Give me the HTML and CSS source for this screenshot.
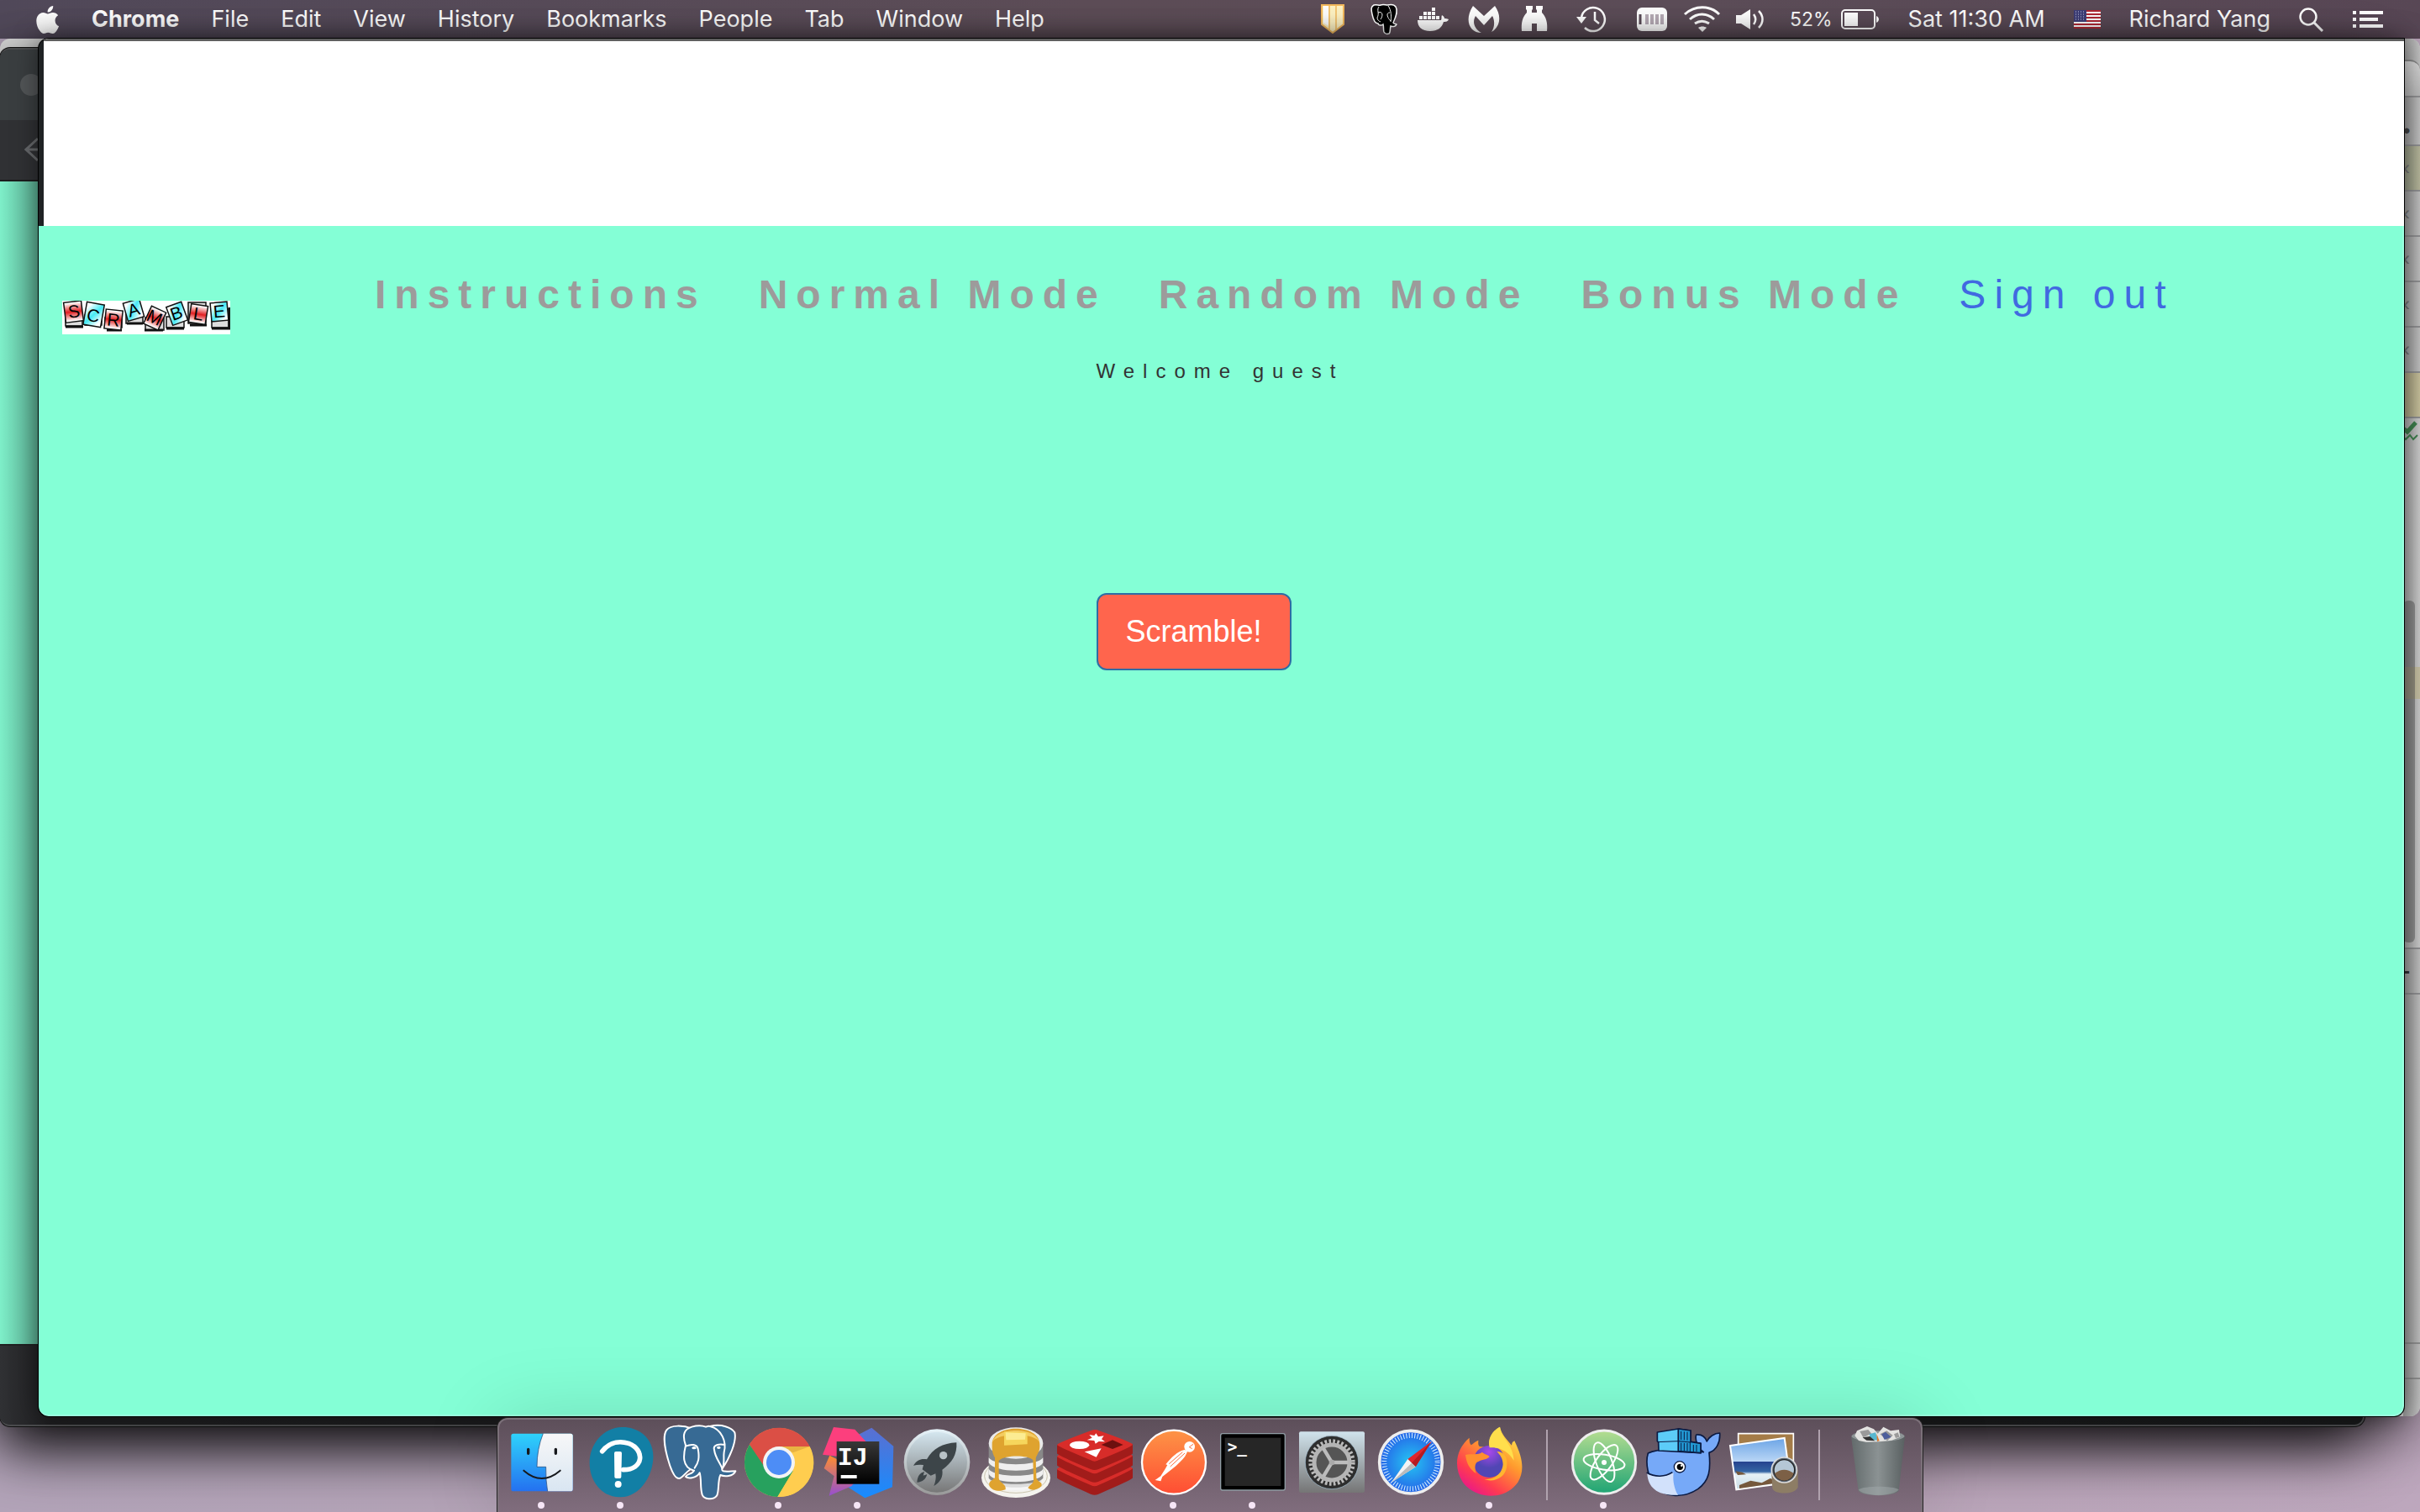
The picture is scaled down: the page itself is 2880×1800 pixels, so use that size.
FILE: index.html
```html
<!DOCTYPE html>
<html lang="en">
<head>
<meta charset="utf-8">
<title>Scramble</title>
<link rel="stylesheet" href="styles.css">
</head>
<body>
<header class="menubar">
  <nav class="menus" aria-label="Menu bar">
    <button class="menu apple" aria-label="Apple menu"><svg width="28" height="33" viewBox="2 0 20.5 24" preserveAspectRatio="none"><path fill="#fff" d="M12.152 6.896c-.948 0-2.415-1.078-3.96-1.04-2.04.027-3.91 1.183-4.961 3.014-2.117 3.675-.546 9.103 1.519 12.09 1.013 1.454 2.208 3.09 3.792 3.039 1.52-.065 2.09-.987 3.935-.987 1.831 0 2.35.987 3.96.948 1.637-.026 2.676-1.48 3.676-2.948 1.156-1.688 1.636-3.325 1.662-3.415-.039-.013-3.182-1.221-3.22-4.857-.026-3.04 2.48-4.494 2.597-4.559-1.429-2.09-3.623-2.324-4.39-2.376-2-.156-3.675 1.09-4.61 1.09zM15.53 3.83c.843-1.012 1.4-2.427 1.245-3.83-1.207.052-2.662.805-3.532 1.818-.78.896-1.454 2.338-1.273 3.714 1.338.104 2.715-.688 3.559-1.701"/></svg></button>
    <button class="menu app-name">Chrome</button>
    <button class="menu">File</button>
    <button class="menu">Edit</button>
    <button class="menu">View</button>
    <button class="menu">History</button>
    <button class="menu">Bookmarks</button>
    <button class="menu">People</button>
    <button class="menu">Tab</button>
    <button class="menu">Window</button>
    <button class="menu">Help</button>
  </nav>
  <div class="status">
    <div class="tray">
      <svg width="60" height="44" viewBox="0 0 60 44"><path d="M17 5h26v23L30 38 17 28z" fill="#fff3c4" stroke="#f3b95c" stroke-width="2"/><path d="M26 6v28M34 6v28" stroke="#f5c877" stroke-width="2"/><path d="M19 6h6v24l-6-4z" fill="#fff"/></svg>
      <svg width="60" height="44" viewBox="0 0 60 44"><path d="M19 5c4-1 6 1 8 0 3-1 6 0 8 0 4-1 8-1 10 2 3 5-1 15-3 19 1 2 3 1 4 2-1 3-5 3-7 2-1 3 0 8-2 9-3 1-5 0-6-2-1-3 0-6-1-9-2 2-6 1-6-1-4 0-6-6-7-11-1-5-2-9 2-11z" fill="#000" stroke="#fff" stroke-width="1.5"/><path d="M25 7c-3 4 1 8-2 13 0 3 2 4 4 5M24 14c6-2 6 4 3 8M36 6c4 5 4 14 3 19M38 14c-5 0-3 6 1 10" fill="none" stroke="#fff" stroke-width="1"/></svg>
      <svg width="60" height="44" viewBox="0 0 60 44"><g fill="#fff"><path d="M11 23h28c1-2 0-4 1-6 3 2 3 3 3 4 2 0 3 0 5 1-1 3-4 3-6 3-2 7-7 11-16 11-10 0-15-5-15-13z"/><path d="M13 18h4v4h-4zM18 18h4v4h-4zM23 18h4v4h-4zM28 18h4v4h-4zM33 18h4v4h-4zM18 13h4v4h-4zM23 13h4v4h-4zM28 13h4v4h-4zM28 8h4v4h-4z"/></g></svg>
      <svg width="60" height="44" viewBox="0 0 60 44"><path fill="#fff" d="M17 6l13 12L43 6c8 11 7 25-4 31 4-6 4-14 1-19L30 29 20 18c-4 7-2 15 7 20C13 38 6 23 17 6z"/></svg>
      <svg width="60" height="44" viewBox="0 0 60 44"><path fill="#fff" d="M20 6h8v4l-1 1v3h6v-3l-1-1V6h8v4l-1 1v3c5 5 7 12 6 22H33v-9h-6v9H15c-1-10 1-17 6-22v-3l-1-1z"/></svg>
      <svg width="78" height="44" viewBox="0 0 78 44"><path d="M26 20a14 14 0 1 1 4 12" fill="none" stroke="#fff" stroke-width="2.5"/><path d="M20 19h12l-6 8z" fill="#fff"/><path d="M42 13v10l5 4" fill="none" stroke="#fff" stroke-width="2.5"/></svg>
      <svg width="62" height="44" viewBox="0 0 62 44"><rect x="14" y="8" width="36" height="28" rx="6" fill="#fff"/><path d="M18 16v12" stroke="#5b4c58" stroke-width="3"/><path d="M26 16v12M32 16v12M38 16v12M44 16v12" stroke="#b9aeb8" stroke-width="4"/></svg>
      <svg width="60" height="44" viewBox="0 0 60 44"><g fill="none" stroke="#fff" stroke-width="3"><path d="M9 16c12-11 30-11 41 0M15 22c9-8 20-8 29 0M21 27c6-4 11-4 17 0"/></g><path d="M25 32c3-2 7-2 10 0l-5 5z" fill="#fff"/></svg>
      <svg width="60" height="44" viewBox="0 0 60 44"><path d="M10 17h6l11-7v24l-11-7h-6z" fill="#fff"/><path d="M31 16c3 4 3 8 0 12M37 12c6 6 6 14 0 20" fill="none" stroke="#fff" stroke-width="2.5"/></svg>
    </div>
    <div class="power"><span class="percent">52%</span><svg width="46" height="26" viewBox="0 0 46 26"><rect x="1" y="2" width="39" height="22" rx="4" fill="none" stroke="#fff" stroke-width="2"/><path d="M4 5h16v16H4zM42 9c4 2 4 6 0 8z" fill="#fff"/></svg></div>
    <span>Sat 11:30 AM</span>
    <svg width="32" height="22" viewBox="0 0 32 22"><path fill="#fff" d="M0 0h32v22H0z"/><path d="M0 1h32M0 5h32M0 9h32M0 13h32M0 17h32M0 21h32" stroke="#b02a35" stroke-width="2"/><path fill="#3f3f78" d="M0 0h15v14H0z"/><path d="M2 2h12M2 5h12M2 8h12M2 11h12" stroke="#cfd0e8" stroke-width="1" stroke-dasharray="1 2"/></svg>
    <span>Richard Yang</span>
    <svg width="30" height="30" viewBox="0 0 30 30"><circle cx="11" cy="12" r="9.500" fill="none" stroke="#fff" stroke-width="2.500"/><path d="M18 19l10 10" stroke="#fff" stroke-width="3"/></svg>
    <svg width="36" height="22" viewBox="0 0 36 22"><path d="M0 3h4M8 3h28M0 11h4M8 11h22M0 19h4M8 19h28" stroke="#fff" stroke-width="4"/></svg>
  </div>
</header>

<main class="desktop">
  <section class="window editor" aria-label="Editor">
    <div class="editor-rail">
      <div class="rail-tab title"></div>
      <div class="rail-tab tools">•</div>
      <div class="rail-tab marked">‹</div>
      <div class="rail-tab">‹</div>
      <div class="rail-tab">‹</div>
      <div class="rail-tab">‹</div>
      <div class="rail-tab">‹</div>
      <div class="rail-tab changed"></div>
      <div class="rail-body"><svg width="19" height="28" viewBox="0 0 19 28"><path d="M0 12l5 4L15 5" fill="none" stroke="#40834f" stroke-width="5"/><path d="M0 22l3 3 5-5 4 5 5-5" fill="none" stroke="#40834f" stroke-width="2"/></svg></div>
      <div class="rail-bar">-</div>
      <div class="rail-panel"></div>
      <div class="rail-foot"></div>
      <div class="rail-end"></div>
      <div class="scroll-mark"></div>
      <div class="scroll-thumb"></div>
    </div>
  </section>
  <section class="window back-browser" aria-label="Background browser">
    <div class="tabs"><span class="dot"></span></div>
    <div class="toolbar"><svg width="30" height="30" viewBox="0 0 30 30"><path d="M16 2L2 15l14 13M2 15h26" fill="none" stroke="#66686b" stroke-width="3"/></svg></div>
    <div class="back-page"></div>
    <div class="downloads"></div>
  </section>
  <section class="window browser" aria-label="Browser">
    <div class="blank"></div>
    <div class="page">
      <div class="page-head">
        <a href="#" class="brand"><svg width="200" height="40" viewBox="0 0 200 40" role="img" aria-label="Scramble">
          <defs>
            <linearGradient id="lr" x2="0" y2="1"><stop offset=".05" stop-color="#fff"/><stop offset=".5" stop-color="#e21f22"/><stop offset=".95" stop-color="#fff"/></linearGradient>
            <linearGradient id="lc" x2="1" y2="1"><stop offset=".15" stop-color="#fff"/><stop offset=".5" stop-color="#46eaf5"/><stop offset=".85" stop-color="#fff"/></linearGradient>
          </defs>
          <path fill="#fff" d="M0 0h200v40H0z"/>
          <g fill="#ddd" stroke="#111" stroke-width="1.500"><path d="M4 18h20v12H4zM27 17h20v12H27zM51 20h20v12H51zM76 14h20v13H76zM99 20h22v15H99zM124 19h21v13H124zM150 2h21v25H150zM178 10h20v22H178z"/></g>
          <path d="M4 31h21M53 35h18M77 27h19M98 35h22M124 33h21M152 29h20M178 33h22M199 8v25" stroke="#111" stroke-width="3"/>
          <g stroke="#111" stroke-width="1.500" font-family="Liberation Sans" font-size="21" text-anchor="middle">
            <g transform="rotate(-7 14 13)"><rect x="3" y="1" width="21" height="24" fill="url(#lr)"/><text x="14" y="20" stroke="none">S</text></g>
            <g transform="rotate(10 37 17)"><rect x="27" y="3" width="21" height="27" fill="url(#lc)"/><text x="37" y="25" stroke="none">C</text></g>
            <g transform="rotate(6 61 23)"><rect x="51" y="11" width="20" height="23" fill="url(#lr)"/><text x="61" y="30" stroke="none">R</text></g>
            <g transform="rotate(-16 85 11)"><rect x="75" y="0" width="20" height="22" fill="url(#lc)"/><text x="85" y="18" stroke="none">A</text></g>
            <g transform="rotate(25 110 20)"><rect x="101" y="9" width="19" height="23" fill="url(#lr)"/><text x="110" y="27" stroke="none">M</text></g>
            <g transform="rotate(-20 136 15)"><rect x="127" y="4" width="19" height="23" fill="url(#lc)"/><text x="136" y="22" stroke="none">B</text></g>
            <g transform="rotate(9 162 16)"><rect x="152" y="5" width="20" height="22" fill="url(#lr)"/><text x="162" y="23" stroke="none">L</text></g>
            <g transform="rotate(-5 187 13)"><rect x="177" y="2" width="20" height="22" fill="url(#lc)"/><text x="187" y="20" stroke="none">E</text></g>
          </g></svg></a>
        <nav class="modes" aria-label="Game modes">
          <a href="#">Instructions</a>
          <a href="#">Normal Mode</a>
          <a href="#">Random Mode</a>
          <a href="#">Bonus Mode</a>
          <a href="#" class="signout">Sign out</a>
        </nav>
      </div>
      <div class="play">
        <p class="welcome">Welcome guest</p>
        <button class="scramble">Scramble!</button>
      </div>
    </div>
  </section>
</main>

<ul class="dock" aria-label="Dock">
  <li class="app running"><svg viewBox="54 54 282 336"><defs><linearGradient id="fa" x2="0" y2="1"><stop stop-color="#2fd3fb"/><stop offset="1" stop-color="#2471f0"/></linearGradient><linearGradient id="fb" x2="0" y2="1"><stop stop-color="#f7f7f8"/><stop offset="1" stop-color="#d9e6f2"/></linearGradient></defs><rect x="85" y="110" width="220" height="206" rx="8" fill="url(#fa)"/><path d="M199 110h98q8 0 8 8v190q0 8-8 8h-82q-7-40-6-87h-32q0-65 22-119z" fill="url(#fb)"/><path d="M199 110q-22 54-22 119h32q-1 47 6 87" fill="none" stroke="#1c3e70" stroke-width="2"/><path d="M146 166v15M244 166v15" stroke="#16181c" stroke-width="10" stroke-linecap="round"/><path d="M130 242q64 56 130 0" fill="none" stroke="#16181c" stroke-width="6" stroke-linecap="round"/></svg></li>
  <li class="app running"><svg viewBox="336 54 282 336"><path d="M480 87c65-2 116 45 112 112-3 65-48 137-117 138-66 1-110-58-110-122 0-68 49-126 115-128z" fill="#127fa5"/><path d="M410 173c30-38 70-36 95-28 58 22 54 95-20 94" fill="none" stroke="#fff" stroke-width="17" stroke-linecap="round"/><path d="M453 180q0-6 6-6h15q6 0 6 6l-2 85q0 5-5 5h-13q-6 0-6-5z" fill="#fff"/><circle cx="467" cy="291" r="12" fill="#fff"/></svg></li>
  <li class="app"><svg viewBox="618 54 282 336"><g fill="#376a94" stroke="#fff" stroke-width="6" stroke-linejoin="round" stroke-linecap="round"><path d="M730 92c-30-12-75-14-90 5-16 22-4 80 12 128 10 28 22 48 34 45 14-5 22-22 36-30"/><path d="M795 84c40-10 78 4 88 22 8 30-18 92-45 130-3 14 28 8 48 8-8 20-40 20-54 14-10 20-4 60-13 74-14 18-46 12-52-4-8-24-2-54-9-78-12 22-44 20-50 14 6-12 24-8 30-22-45-10-38-58-30-90-14-40-4-58 22-66 20-6 40-4 50 0 10-4 12-4 15-2z"/><path d="M708 155c20-8 40-8 44 10 6 32 2 48-12 68M848 150c-20-4-44 0-38 18 4 30 20 44 28 66M795 84c42 10 60 56 50 92-3 20 3 36-5 56" fill="none"/></g><ellipse cx="738" cy="161" rx="8" ry="5" fill="#fff"/><ellipse cx="826" cy="160" rx="7" ry="5" fill="#fff"/></svg></li>
  <li class="app running"><svg viewBox="900 54 282 336"><circle cx="1041" cy="213" r="123" fill="#ffcd4f"/><path d="M1041 213L936 149a123 123 0 0 1 215 7h-110z" fill="#db4f45"/><path d="M1041 90a123 123 0 0 0-105 59l52 90 53-26z" fill="#db4f45"/><path d="M936 149a123 123 0 0 0 100 187l55-92-50-31-44 27z" fill="#27a15e"/><path d="M1041 156h110a123 123 0 0 1-115 180l58-95z" fill="#ffcd4f"/><path d="M1041 156h110l-60 22z" fill="#d8a23a" opacity=".6"/><circle cx="1041" cy="213" r="57" fill="#f4f4f4"/><circle cx="1041" cy="213" r="45" fill="#4d8df6"/></svg></li>
  <li class="app running"><svg viewBox="1182 54 282 336"><defs><linearGradient id="ij" x2="0" y2="1"><stop stop-color="#5b6fd0"/><stop offset="1" stop-color="#168cff"/></linearGradient><linearGradient id="ijp" x2="0" y2="1"><stop stop-color="#ff8d2e"/><stop offset="1" stop-color="#954fd0"/></linearGradient><linearGradient id="ijk" x2="0" y2="1"><stop stop-color="#383838"/><stop offset="1" stop-color="#000"/></linearGradient></defs><path d="M1372 89l78 66-4 146-98 39-68-44 40-180z" fill="url(#ij)"/><path d="M1222 188l-20 46 36 28-18 70 80-34 40-50z" fill="url(#ijp)"/><path d="M1236 87l76 8 40 44-40 60-115-14z" fill="#fc3f7d"/><rect x="1247" y="138" width="152" height="152" fill="url(#ijk)"/><text x="1250" y="223" font-family="Liberation Mono" font-size="90" font-weight="700" fill="#fff">IJ</text><path d="M1262 258h57v12h-57z" fill="#fff"/></svg></li>
  <li class="app"><svg viewBox="54 54 282 336"><defs><linearGradient id="ro" x2="0" y2="1"><stop stop-color="#d4e6ef"/><stop offset="1" stop-color="#777"/></linearGradient><linearGradient id="ror" x2="0" y2="1"><stop stop-color="#e6f3f9"/><stop offset="1" stop-color="#999"/></linearGradient></defs><circle cx="195" cy="212" r="118" fill="url(#ror)"/><circle cx="195" cy="212" r="108" fill="url(#ro)"/><path d="M265 142c-50 2-84 22-106 60-22-3-34 2-48 22q18-4 36-2l-4 16 30 22 17-7q4 20-6 44c24-14 34-34 30-58 35-24 54-55 51-97zM150 246c-16 4-24 16-26 38 20-2 32-12 36-30-8 6-12 4-14 6z" fill="#3d4549"/><circle cx="218" cy="188" r="14" fill="#b9c3c7"/></svg></li>
  <li class="app"><svg viewBox="336 54 282 336"><ellipse cx="477" cy="268" rx="123" ry="71" fill="#f4f3ee"/><ellipse cx="477" cy="262" rx="112" ry="60" fill="none" stroke="#c9c3ad" stroke-width="3"/><path d="M384 258v30c20 34 160 34 184 0v-30z" fill="#ddd"/><path d="M380 144v124c10 30 184 30 194 0V144z" fill="#888"/><path d="M380 236v18c20 38 174 38 194 0v-18c-20 32-174 32-194 0zM380 196v18c20 38 174 38 194 0v-18c-20 32-174 32-194 0z" fill="#efefef"/><path d="M384 280c20 30 164 30 184 0v14c-20 26-164 26-184 0z" fill="#f6f6f6"/><ellipse cx="477" cy="144" rx="97" ry="56" fill="#e9e9e9"/><path d="M392 148c0-74 170-74 170 0 2 28-10 36-14 50l2 70c6 18 24 14 18 30-18 16-36 16-48 6 10-14 20-14 20-30l-2-70c-20-18-98-18-122 2v64c4 18 28 20 24 40-20 8-48 6-58-14-4-20 16-18 20-30v-70c-10-16-10-30-10-48z" fill="#dfa32f"/><path d="M392 144c10-60 160-60 170 0-10-40-160-40-170 0z" fill="#f3cb62"/><path d="M435 103l83 3v42l-83 4z" fill="#f6d65c"/><path d="M440 106l72 3-2 22-68 2z" fill="#fcec92"/></svg></li>
  <li class="app"><svg viewBox="618 54 282 336"><path fill="#a11c1a" d="M624 238v30q0 6 120 58 14 6 28 0 122-52 122-58v-34z"/><path fill="#d82c29" d="M624 236q0-6 120-54 18-6 30 0 120 46 120 52t-122 60q-14 8-28 0-120-52-120-58z"/><path fill="#a11c1a" d="M624 193v30q0 6 120 58 14 6 28 0 122-52 122-58v-34z"/><path fill="#d82c29" d="M624 191q0-6 120-54 18-6 30 0 120 46 120 52t-122 60q-14 8-28 0-120-52-120-58z"/><path fill="#a11c1a" d="M624 151v30q0 6 120 56 14 6 28 0 122-50 122-56v-34z"/><path fill="#d82c29" d="M624 150q0-6 120-50 18-8 30 0 120 42 120 49t-122 56q-14 8-28 0-120-50-120-55z"/><ellipse cx="704" cy="151" rx="35" ry="14" fill="#fff"/><path fill="#fff" d="M763 109l8 12 20-3-8 12 12 9-22-1-12 8-4-11-26-2 18-8-10-11 18 3zM722 175l60-12-18 31z"/><path fill="#6d100f" d="M782 150l40-17 38 17-38 15z"/></svg></li>
  <li class="app running"><svg viewBox="900 54 282 336"><defs><linearGradient id="pm" x2="0" y2="1"><stop stop-color="#fd9446"/><stop offset="1" stop-color="#ff4d33"/></linearGradient></defs><circle cx="1041" cy="212" r="114" fill="url(#pm)" stroke="#fff" stroke-width="7"/><circle cx="1097" cy="157" r="19" fill="#fff"/><path d="M1078 168c-26 6-46 28-66 52l6 2-8 14-16 26-20 14 20 4 6-16 48-38 14-14q24-22 28-42z" fill="#fff"/><path d="M1080 180l-52 48M1072 176l-48 42M1110 148l-14 10 10 6" fill="none" stroke="#fe6d3c" stroke-width="3"/></svg></li>
  <li class="app running"><svg viewBox="1182 54 282 336"><rect x="1208" y="110" width="230" height="202" rx="7" fill="#000" stroke="#8f9ca3" stroke-width="4"/><rect x="1223" y="125" width="200" height="172" fill="#262626"/><text x="1232" y="176" font-family="DejaVu Sans Mono" font-size="58" font-weight="700" fill="#fff">&gt;_</text></svg></li>
  <li class="app"><svg viewBox="54 54 282 336"><defs><linearGradient id="se" x2="0" y2="1"><stop stop-color="#d0e3ec"/><stop offset="1" stop-color="#757575"/></linearGradient></defs><rect x="78" y="103" width="234" height="218" rx="6" fill="url(#se)"/><circle cx="195" cy="213" r="95" fill="#2e2e2e" stroke="#a9c3d4" stroke-width="2"/><circle cx="195" cy="213" r="76" fill="none" stroke="#bbb" stroke-width="14" stroke-dasharray="8 7"/><circle cx="195" cy="213" r="63" fill="#555" stroke="#b5b5b5" stroke-width="15"/><path d="M195 213h58M195 213l-30-50M195 213l-30 50" stroke="#bcbcbc" stroke-width="13"/><circle cx="195" cy="213" r="10" fill="#aaa"/></svg></li>
  <li class="app"><svg viewBox="336 54 282 336"><defs><radialGradient id="sa"><stop stop-color="#25c6f2"/><stop offset="1" stop-color="#2563e8"/></radialGradient></defs><circle cx="477" cy="212" r="112" fill="url(#sa)" stroke="#eee" stroke-width="11"/><circle cx="477" cy="212" r="95" fill="none" stroke="#d8efff" stroke-width="18" stroke-dasharray="3 7"/><path d="M551 138l-57 91-28-28z" fill="#e0252c"/><path d="M551 138l-57 91-14-14z" fill="#b61a20"/><path d="M408 284l58-83 28 28z" fill="#f3f3f3"/><path d="M408 284l72-69 14 14z" fill="#bbb"/></svg></li>
  <li class="app running"><svg viewBox="618 54 282 336"><defs><linearGradient id="ff" x1="1" y1="0" x2=".3" y2="1"><stop offset=".1" stop-color="#ffe84f"/><stop offset=".45" stop-color="#ff9a2e"/><stop offset=".8" stop-color="#ff3b50"/><stop offset="1" stop-color="#ea1a86"/></linearGradient><radialGradient id="fp" cy=".2"><stop stop-color="#a847ea"/><stop offset="1" stop-color="#5146b4"/></radialGradient></defs><path d="M686 125c0 12 0 18 6 26 8-4 12-12 26-17 0 10-2 16 4 22l36 4c-6-30 10-60 37-74 6 28 26 46 42 66 2-8 0-10 10-16 34 70 34 110 12 148-48 68-152 60-196 0-36-56-24-120 23-159z" fill="url(#ff)"/><circle cx="757" cy="210" r="57" fill="url(#fp)"/><path d="M672 186c20-6 46 2 60-10 6 8 20 8 26 16-8 12-30 10-40 18-16 4-12 30-8 42-22-14-34-34-38-66z" fill="#ff8f2f"/><path d="M784 174c30 0 38 26 36 46 0 44-40 66-80 54 40 0 64-24 66-54 0-20-10-34-22-46z" fill="#ffb52f"/><path d="M758 160c-8-32 10-60 37-74 4 44 48 60 50 120-20-34-50-48-87-46z" fill="#ffdf4c"/></svg></li>
  <li class="divider" aria-hidden="true"></li>
  <li class="app running"><svg viewBox="-114 54 282 336"><defs><linearGradient id="at" x2="0" y2="1"><stop stop-color="#b5dd91"/><stop offset="1" stop-color="#1ea474"/></linearGradient></defs><circle cx="27" cy="212" r="113" fill="url(#at)" stroke="#eee" stroke-width="9"/><g fill="none" stroke="#fff" stroke-width="6"><ellipse cx="27" cy="212" rx="74" ry="27" transform="rotate(9 27 212)"/><ellipse cx="27" cy="212" rx="74" ry="28" transform="rotate(69 27 212)"/><ellipse cx="27" cy="212" rx="74" ry="28" transform="rotate(-54 27 212)"/></g><circle cx="27" cy="213" r="9" fill="#fff"/></svg></li>
  <li class="app"><svg viewBox="168 54 282 336"><g stroke="#0b1a42" stroke-width="5" stroke-linejoin="round"><path d="M382 176c-20-14-32-44-26-62 18-2 32 8 38 24 8-16 26-30 46-30 2 34-12 62-38 70 6 60 2 100-40 130-50 34-116 30-150-6-30-34-38-90-28-122 40-22 150-12 198-4z" fill="#76a9f8"/><path d="M181 252c30 14 62 14 94-2-4 30 4 60 16 79-70 4-108-24-110-77z" fill="#d2e1fb" stroke="none"/><path d="M179 249c30 18 66 16 92-1" fill="none"/><path d="M217 105l75-12 44 6v40l36 6v34l-150-8-1-30-4-4z" fill="#5cccf8"/><path d="M292 93l44 6v40l36 6v34l-80-6z" fill="#2299d4"/><path d="M218 140l74-3 44 4M292 93v80M334 140v36M302 102v30M313 103v30M324 104v30M302 143v28M313 144v28M324 144v28M346 150v24M357 150v24" fill="none" stroke-width="3"/></g><circle cx="297" cy="229" r="20" fill="#fff" stroke="#0b1a42" stroke-width="4"/><circle cx="298" cy="229" r="11" fill="#000"/><circle cx="304" cy="224" r="4" fill="#fff"/></svg></li>
  <li class="app"><svg viewBox="450 54 282 336"><defs><linearGradient id="sk" x2="0" y2="1"><stop stop-color="#6ba4e6"/><stop offset=".45" stop-color="#b8d5f5"/><stop offset=".46" stop-color="#26438f"/><stop offset=".65" stop-color="#3465a3"/><stop offset=".7" stop-color="#e6f1f6"/><stop offset="1" stop-color="#c8dce5"/></linearGradient></defs><path d="M506 110h197v160H506z" fill="#a47c48" stroke="#fff" stroke-width="5"/><path d="M477 153l194-27 22 158-194 26z" fill="url(#sk)" stroke="#fff" stroke-width="6"/><path d="M496 244l24 4 14 8-30 2zM510 294l40-16 40 8 30-16 40 14-150 22z" fill="#75583c"/><path d="M624 240l4 66c10 24 80 22 91-4v-62z" fill="#8d7d65"/><circle cx="670" cy="240" r="45" fill="#586470" stroke="#ddd" stroke-width="5"/><circle cx="670" cy="240" r="37" fill="#b5c7d5" stroke="#222" stroke-width="4"/><path d="M636 252q34-26 68 0-8 26-34 26t-34-26z" fill="#7c6046"/></svg></li>
  <li class="divider" aria-hidden="true"></li>
  <li class="app"><svg viewBox="858 54 282 336"><defs><linearGradient id="tr" x2="1" y2="0"><stop stop-color="#626a6b"/><stop offset=".5" stop-color="#8b9293"/><stop offset="1" stop-color="#596061"/></linearGradient></defs><ellipse cx="1005" cy="120" rx="95" ry="20" fill="#8d9596"/><path d="M909 120c20 26 172 26 192 0l-22 194c-14 22-130 22-144 0z" fill="url(#tr)"/><path d="M922 118l8-18 36-16 24 10 14 16 20-24 26 14 30-4 4 26-30 12-44 5-48 1-26-5z" fill="#e3e3e1"/><path d="M940 102l30-6 12 14-30 14zM1012 112l24-12 22 16-20 20zM1062 112l14-6 6 16-14 4z" fill="#9a9a9a"/><path d="M974 112l22-6 10 28-28-2z" fill="#57b7cf"/><path d="M1018 112l14-8 20 18-24 10z" fill="#4c5e9c"/><path d="M1000 110l10 26-8 2z" fill="#df7a30"/><path d="M950 124l26-4 18 16-30-2z" fill="#333"/><path d="M935 310c20-14 124-14 144 0-14 26-130 26-144 0z" fill="#a2aaab" opacity=".5"/></svg></li>
</ul>
</body>
</html>
```
FILE: styles.css
```css
* { box-sizing: border-box; }

body {
  margin: 0;
  min-height: 100vh;
  display: flex;
  flex-direction: column;
  overflow: hidden;
  position: relative;
  background: linear-gradient(90deg, #b3a4b9, #b7a4b6 50%, #bda7bd);
  font-family: "Liberation Sans", Arial, sans-serif;
}

button {
  border: 0;
  background: none;
  color: inherit;
  font: inherit;
  padding: 0;
}

a { text-decoration: none; }

svg { display: block; flex: none; }

/* Menu bar */
.menubar {
  height: 46px;
  display: flex;
  justify-content: space-between;
  align-items: center;
  padding: 0 44px 0 43px;
  background: linear-gradient(90deg, #51495a, #5d4d57 45%, #5c4d58 70%, #584755);
  color: #fff;
  font-family: Inter, sans-serif;
  font-size: 27px;
  line-height: 44px;
  white-space: nowrap;
}

.menus { display: flex; align-items: center; gap: 38px; }
.app-name { font-weight: 700; }
.status { display: flex; align-items: center; gap: 34px; }
.tray { display: flex; }
.power { display: flex; align-items: center; gap: 10px; margin-left: -20px; }
.percent { font-size: 23px; }

/* Desktop windows */
.desktop { flex: 1; position: relative; }
.window { position: absolute; overflow: hidden; }

.editor {
  right: 0;
  top: 0;
  bottom: 114px;
  left: 0;
  border-radius: 12px;
  background: #d9d9d9;
  box-shadow: 0 30px 60px rgba(0, 0, 0, .4);
}

.editor-rail {
  position: relative;
  width: 20px;
  height: 100%;
  margin-left: auto;
  padding-top: 25px;
  display: flex;
  flex-direction: column;
  background: linear-gradient(90deg, #a0a0a0, #c2c2c2);
  color: #777;
  font-size: 24px;
  line-height: 52px;
}

.rail-tab { height: 54px; border-bottom: 2px solid #929294; }
.rail-tab.title { height: 45px; border-top: 2px solid #888; border-radius: 0 12px 0 0; background: linear-gradient(#d8d8d8, #bcbcbc); }
.rail-tab.tools { height: 58px; line-height: 80px; color: #444; }
.rail-tab.marked { background: linear-gradient(90deg, #979c87, #b9b99d); }
.rail-tab.changed { background: linear-gradient(90deg, #aaa484, #cac39d); }
.rail-body { flex: 1; background: linear-gradient(90deg, #aeaeae, #cecece); }
.rail-bar { height: 56px; border: solid #929294; border-width: 2px 0; color: #333; font-weight: 700; }
.rail-panel { height: 416px; border-bottom: 2px solid #929292; }
.rail-foot { height: 42px; border-bottom: 2px solid #929292; }
.rail-end { height: 44px; }

.scroll-mark, .scroll-thumb { position: absolute; }
.scroll-mark { left: 0; right: 0; top: 748px; height: 38px; background: #c8c2a4; }
.scroll-thumb { left: 0; width: 14px; top: 669px; height: 407px; border-radius: 6px; background: rgba(80, 80, 80, .45); }

.back-browser {
  left: 0;
  right: 66px;
  top: 11px;
  bottom: 102px;
  display: flex;
  flex-direction: column;
  border: solid #4b4c4e;
  border-width: 2px 2px 2px 0;
  border-radius: 12px;
  background: #2c2d30;
  box-shadow: 0 0 0 1px #111, 0 24px 70px rgba(0, 0, 0, .85);
}

.tabs { height: 84px; padding: 29px 24px; background: #3a3e40; }
.dot { display: block; width: 26px; height: 26px; border-radius: 50%; background: #525557; }
.toolbar { height: 73px; padding: 20px 29px; background: #303134; border-bottom: 2px solid #1c1c1d; }
.back-page { flex: 1; background: linear-gradient(90deg, #7eefc9, #58a98e 46px); }
.downloads { height: 96px; border-top: 2px solid #202122; background: linear-gradient(90deg, #303134, #1e1e20 60px, #18191a); }

.browser {
  left: 46px;
  right: 19px;
  top: 0;
  bottom: 114px;
  display: flex;
  flex-direction: column;
  background: #1f2224;
  border-radius: 12px 0 12px 12px;
  box-shadow: 0 0 0 1px #000, 0 0 30px rgba(0, 0, 0, .5);
}

.blank { height: 223px; margin-left: 6px; border-top: 3px solid #5f5f5f; background: #fff; }

.page {
  flex: 1;
  display: flex;
  flex-direction: column;
  border: solid #9affdf;
  border-width: 0 2px 2px 0;
  border-radius: 0 0 12px 12px;
  background: #84ffd6;
}

.page-head { display: flex; align-items: flex-start; gap: 172px; padding: 53px 28px 0; }
.brand { padding-top: 36px; }
.modes { display: flex; gap: 62px; white-space: nowrap; font-size: 48px; line-height: 58px; letter-spacing: 10px; }
.modes a { color: #9d9b9b; font-weight: 700; }
.modes .signout { color: #4169e1; font-weight: 400; }

.play { width: 296px; margin: 28px auto 0; display: flex; flex-direction: column; align-items: flex-start; }
.welcome { margin: 0 0 248px; color: #333; font-size: 24px; line-height: 32px; letter-spacing: 10px; white-space: nowrap; }

.scramble {
  padding: 20px 33px;
  border: 2px solid #2e6da4;
  border-radius: 12px;
  background: #ff654d;
  color: #fff;
  font-size: 36px;
  line-height: 48px;
}

/* Dock */
.dock {
  position: absolute;
  left: 50%;
  bottom: 0;
  transform: translateX(-50%);
  display: flex;
  margin: 0;
  padding: 0 6px 0 4px;
  height: 112px;
  list-style: none;
  border: solid #7b7079;
  border-width: 2px 2px 0;
  border-radius: 12px 12px 0 0;
  background: linear-gradient(#5d4f5a, #806d7d);
  box-shadow: 0 0 0 1px #222, 0 0 90px rgba(0, 0, 0, .15);
}

.app { position: relative; width: 94px; height: 112px; margin-top: -2px; }
.app svg { width: 94px; height: 112px; }

.running::after {
  content: "";
  position: absolute;
  left: 42px;
  bottom: 4px;
  width: 8px;
  height: 8px;
  border-radius: 50%;
  background: #f6e6f6;
}

.divider { width: 2px; height: 84px; margin: 12px 20px 0; background: #b0a2ae; }
```
